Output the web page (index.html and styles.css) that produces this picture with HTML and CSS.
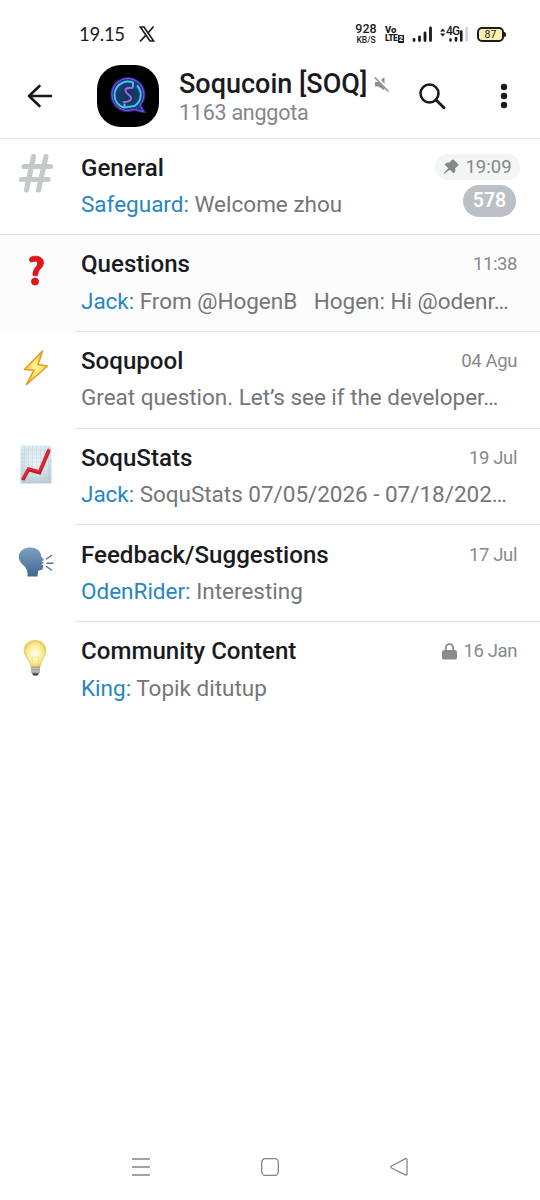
FILE: index.html
```html
<!DOCTYPE html>
<html lang="id">
<head>
<meta charset="utf-8">
<title>Soqucoin [SOQ]</title>
<link rel="stylesheet" href="styles.css">
</head>
<body>
<div class="screen">
  <div class="status">
    <span class="clock">19.15</span>
    <svg class="x-logo" width="16" height="16" viewBox="0 0 16 16" fill="none" stroke="#1b1b1d" stroke-width="1.700"><path d="M1.300 1H5L14.700 15H11Z"/><path d="M14.6 .5L9 7M6.7 9.300L1 15.500"/></svg>
    <span class="speed"><b>928</b><i>KB/S</i></span>
    <span class="volte"><b>Vo</b><span class="lte">LTE<em>2</em></span></span>
    <svg class="signal" width="21" height="17" viewBox="0 0 21 17" stroke="#1b1b1d" stroke-width="2.800" stroke-linecap="round"><path d="M2 13.500V14.500M7.500 11V14.500M13 7V14.500M18.500 2V14.500"/></svg>
    <span class="mobile"><svg width="28" height="17" viewBox="0 0 28 17"><path d="M0 5.500L2.700 2.500L5.400 5.500ZM0 7.500L2.700 10.500L5.400 7.500Z" fill="#1b1b1d"/><path d="M10.500 13.500V14.500M16 11V14.500M21.300 5.500V14.500" stroke="#1b1b1d" stroke-width="2.600" stroke-linecap="round"/><path d="M26.600 2V14.500" stroke="#d2d2d2" stroke-width="2.600" stroke-linecap="round"/></svg><span class="net">4G</span></span>
    <span class="battery">87</span>
  </div>

  <header class="header">
    <svg class="back" width="26" height="24" viewBox="0 0 26 24" fill="none" stroke="#17191c" stroke-width="2.600" stroke-linecap="round" stroke-linejoin="round"><path d="M24 12H2M12.500 2L2 12L12.500 22"/></svg>
    <svg class="avatar" width="62" height="62" viewBox="0 0 62 62" fill="none">
      <defs><radialGradient id="halo"><stop offset="0" stop-color="#143050"/><stop offset=".7" stop-color="#12406a"/><stop offset="1" stop-color="#1c3c9a"/></radialGradient></defs>
      <rect width="62" height="62" rx="24" fill="#000"/>
      <path d="M43 40A16 16 0 1 0 36 44.700C40 44 43 46.500 46.500 46.500C44.500 44 44 42 43 40Z" fill="url(#halo)" stroke="#33249b" stroke-width="3"/>
      <path d="M43 40A16 16 0 1 0 36 44.700C40 44 43 46.500 46.500 46.500C44.500 44 44 42 43 40Z" stroke="#7d6bd0" stroke-width="1"/>
      <path d="M27.500 42.800A13.300 13.300 0 0 1 26 17.500Q30 15.700 36 17.300V22.500M40 20.500A13.300 13.300 0 0 1 37.500 41L27.500 42.500V38.500" stroke="#40c9ec" stroke-width="1.900"/>
      <path d="M36 23Q28 22 28.500 26C29 29.500 35 30 34 34Q32 37.500 26 37" stroke="#a267ea" stroke-width="1.900"/>
    </svg>
    <div class="heading">
      <div class="title-line"><h1>Soqucoin [SOQ]</h1><svg width="16" height="17" viewBox="0 0 16 17"><path d="M1 6H4.500L10.500 1V14.500L4.500 10.500H1Z" fill="#8b8f92"/><path d="M1.500 .5L15.500 15.500" stroke="#fff" stroke-width="3"/><path d="M.8 1.500L14.500 15.500" stroke="#8b8f92" stroke-width="1.600"/></svg></div>
      <p class="members">1163 anggota</p>
    </div>
    <svg class="search" width="28" height="28" viewBox="0 0 28 28" fill="none" stroke="#17191c" stroke-width="2.500" stroke-linecap="round"><circle cx="11.500" cy="11.500" r="9"/><path d="M18 18L26 25.700" stroke-width="2.900"/></svg>
    <svg class="more" width="8" height="26" viewBox="0 0 8 26" fill="#17191c"><circle cx="4" cy="4" r="3.200"/><circle cx="4" cy="13" r="3.200"/><circle cx="4" cy="22" r="3.200"/></svg>
  </header>

  <main class="topics">
    <article class="topic topic-general">
      <svg class="icon" viewBox="0 0 75 96" fill="none" stroke="#c6c9cc" stroke-width="5.200" stroke-linecap="round"><path d="M33.500 18.500L26.500 52M46 18.500L38.500 52M24 28.500H50.500M21.500 41.500H48"/></svg>
      <div class="body">
        <div class="line"><h2>General</h2><span class="pinned"><svg width="16" height="16" viewBox="0 0 16 16" fill="#858889"><path d="M8.800 1Q10 0 11 1L15 5Q16 6 14.800 7L12.200 9.300Q13 13 10.500 14.200L6.800 10.700L1 15L.8 14.300L5.300 9.200L1.500 5.500Q3.200 3.200 6.700 3.600Z"/></svg>19:09</span></div>
        <div class="line"><p class="preview"><span>Safeguard:</span> Welcome zhou</p><span class="unread">578</span></div>
      </div>
    </article>
    <article class="topic topic-shaded">
      <svg class="icon" viewBox="0 0 75 96"><g fill="#e5141b" stroke="#b9161a" stroke-width=".7"><path d="M29.500 25.500Q29 22.500 32 21.700C38 20 43.800 22.500 43.500 28C43.300 33.500 37.800 34 37.800 39.500Q37.800 40.800 36.500 40.800H34Q32.800 40.800 32.900 39.500C33 33 37.800 31.500 37.500 28.500C37.200 25.300 34.500 26 32 26.900Q30 27.500 29.500 25.500Z"/><circle cx="35" cy="46.500" r="3.600"/></g></svg>
      <div class="body">
        <div class="line"><h2>Questions</h2><time>11:38</time></div>
        <div class="line"><p class="preview tight"><span>Jack:</span> From @HogenB &nbsp; Hogen: Hi @odenr…</p></div>
      </div>
    </article>
    <article class="topic">
      <svg class="icon" viewBox="0 0 75 96"><defs><radialGradient id="bolt"><stop offset="0" stop-color="#fff9a5"/><stop offset="1" stop-color="#ffd329"/></radialGradient></defs><path d="M42.500 19L24.500 37.500L34 38.200L26.500 52.500L47.500 34L38 32.500Z" fill="url(#bolt)" stroke="#e69a27" stroke-width="1.600" stroke-linejoin="round"/></svg>
      <div class="body">
        <div class="line"><h2>Soqupool</h2><time>04 Agu</time></div>
        <div class="line"><p class="preview tight">Great question. Let’s see if the developer…</p></div>
      </div>
    </article>
    <article class="topic">
      <svg class="icon" viewBox="0 0 75 96"><defs><linearGradient id="paper" x2="0" y2="1"><stop stop-color="#dcebf2"/><stop offset="1" stop-color="#b9ccd4"/></linearGradient><radialGradient id="glow"><stop stop-color="#fff" stop-opacity=".85"/><stop offset="1" stop-color="#fff" stop-opacity="0"/></radialGradient></defs><path d="M20.500 16.500H51.500V54.500H20.500Z" fill="url(#paper)"/><path d="M20.500 16.500H51.500V54.500H20.500Z" fill="url(#glow)"/><path d="M24.500 17V54M28.500 17V54M32.500 17V54M36.500 17V54M40.500 17V54M44.500 17V54M48.500 17V54M20.500 21H51.500M20.500 25H51.500M20.500 29H51.500M20.500 33H51.500M20.500 37H51.500M20.500 41H51.500M20.500 45H51.500M20.500 49H51.500" stroke="#b4d0df" stroke-width=".4"/><path d="M22.700 51L28.500 40.500L39.500 43.500L49 21" fill="none" stroke="#a91e25" stroke-width="3.600"/><path d="M22.700 50L28.500 39.500L39.500 42.500L49 20" fill="none" stroke="#ed2430" stroke-width="2.400"/></svg>
      <div class="body">
        <div class="line"><h2>SoquStats</h2><time>19 Jul</time></div>
        <div class="line"><p class="preview tight"><span>Jack:</span> SoquStats 07/05/2026 - 07/18/202…</p></div>
      </div>
    </article>
    <article class="topic">
      <svg class="icon" viewBox="0 0 75 96"><defs><linearGradient id="head" x2="0" y2="1"><stop stop-color="#7d9fc1"/><stop offset="1" stop-color="#426690"/></linearGradient></defs><path d="M27.500 51.500Q28.500 44 23 40C14 31 21 22.500 30 22.500C38 22.500 41 27 41.300 31.500L44 35L41.700 36.200L44 38L41.500 39.300L43.500 40.500L42.500 44.500Q38.500 45.500 38 46L37.500 51.500Z" fill="url(#head)"/><path d="M46.500 34L51.500 30.500M47 38.200H53M46.500 41.500L51.500 45" stroke="#54779d" stroke-width="1.500" stroke-linecap="round"/></svg>
      <div class="body">
        <div class="line"><h2>Feedback/Suggestions</h2><time>17 Jul</time></div>
        <div class="line"><p class="preview"><span>OdenRider:</span> Interesting</p></div>
      </div>
    </article>
    <article class="topic topic-last">
      <svg class="icon" viewBox="0 0 75 96"><defs><radialGradient id="bulb"><stop offset=".15" stop-color="#fffce2"/><stop offset=".75" stop-color="#f8e98a"/><stop offset="1" stop-color="#e8cf67"/></radialGradient></defs><path d="M31 45Q31 41 27.300 36.500C20.500 27 26 18.500 35 18.500C44 18.500 49.500 27 43 36.500Q40 41 40 45Z" fill="url(#bulb)" stroke="#dbc462" stroke-width=".8"/><path d="M33 43L32.300 35H38.500L37.500 43" fill="none" stroke="#e5cf75" stroke-width=".4"/><path d="M31 44.500H40V50.500L38 52H33L31 50.500Z" fill="#a3a3a0"/><path d="M31 46.500H40M31 49H40" stroke="#d0d0cd" stroke-width=".8"/><path d="M32 51.500H39L37.500 53.500H33.500Z" fill="#363636"/></svg>
      <div class="body">
        <div class="line"><h2>Community Content</h2><time><svg class="lock" width="15" height="17" viewBox="0 0 15 17"><path d="M3.800 8V5A3.700 3.900 0 0 1 11.200 5V8" fill="none" stroke="#898b8c" stroke-width="1.800"/><rect y="7" width="15" height="9.600" rx="2.200" fill="#898b8c"/></svg>16 Jan</time></div>
        <div class="line"><p class="preview"><span>King:</span> Topik ditutup</p></div>
      </div>
    </article>
  </main>

  <nav class="nav">
    <svg width="18" height="20" viewBox="0 0 18 20" stroke="#858585" stroke-width="1.500"><path d="M0 2H18M0 10H18M0 18H18"/></svg>
    <svg width="18" height="20" viewBox="0 0 18 20" fill="none" stroke="#858585" stroke-width="1.300"><rect x=".7" y="1.700" width="16.600" height="16.600" rx="3.500"/></svg>
    <svg width="18" height="20" viewBox="0 0 18 20" fill="none" stroke="#858585" stroke-width="1.300"><path d="M1.500 9L15.500 1.700Q17 1.200 17 2.700V17Q17 18.500 15.500 17.800L1.500 11Q0 10 1.500 9Z"/></svg>
  </nav>
</div>
</body>
</html>
```
FILE: styles.css
```css
* { box-sizing: border-box; }
body { margin: 0; background: #fff; font-family: Roboto, sans-serif; color: #191b1e; }
h1, h2, p { margin: 0; font-weight: 400; white-space: nowrap; }
svg { display: block; flex: none; }
.screen { width: 540px; height: 1200px; display: flex; flex-direction: column; overflow: hidden; }

.status { height: 54px; padding: 14px 34px 0 79px; display: flex; align-items: center; color: #1b1b1d; }
.clock { width: 60px; font: 18.5px/24px Lato, sans-serif; letter-spacing: -.3px; }
.speed { width: 22px; margin-left: 200px; display: flex; flex-direction: column; align-items: center; font-size: 12.5px; line-height: 12px; }
.speed b { font-weight: 500; }
.speed i { font-style: normal; font-weight: 500; font-size: 8.5px; line-height: 10px; }
.volte { width: 20px; margin-left: 8px; font: 800 9.5px/9px Roboto, sans-serif; display: flex; flex-direction: column; }
.lte { display: flex; align-items: center; font-size: 8.5px; font-weight: 900; letter-spacing: -.6px; }
.lte em { flex: none; width: 6px; margin-left: 1px; font-style: normal; font-size: 7px; line-height: 8px; text-align: center; letter-spacing: 0; background: #1b1b1d; color: #fff; }
.signal { margin-left: 7px; }
.mobile { margin-left: 7px; position: relative; }
.net { position: absolute; left: 6px; top: -1px; font-size: 12px; line-height: 12px; font-weight: 500; letter-spacing: -.7px; background: #fff; }
.battery { width: 27px; height: 15px; margin-left: 9px; border: 2px solid #1b1b1d; border-radius: 5px; background: #fff0b1; font-size: 10.5px; line-height: 11px; text-align: center; position: relative; }
.battery::after { content: ""; position: absolute; right: -4px; top: 3px; width: 2px; height: 5px; border-radius: 0 2px 2px 0; background: #1b1b1d; }

.header { height: 85px; display: flex; align-items: center; padding: 0 32px 0 27px; border-bottom: 1px solid #e9e9e9; }
.avatar { margin-left: 43.5px; }
.heading { flex: none; width: 239px; margin-left: 20.5px; padding-top: 4px; }
.title-line { display: flex; align-items: center; gap: 7px; height: 30px; }
h1 { font-size: 27px; line-height: 30px; font-weight: 500; }
.members { font-size: 21.5px; line-height: 28px; letter-spacing: -.25px; color: #84878a; }
.more { margin-left: auto; }

.topics { flex: 1; }
.topic { height: 96.75px; display: flex; }
.topic-general { height: 96px; border-bottom: 1px solid #dedede; }
.topic-shaded { background: #fcfcfc; }
.icon { width: 75px; height: 96px; }
.topic-general .icon { margin-top: -1px; }
.body { flex: 1; min-width: 0; padding: 11.2px 23px 0 6px; border-bottom: 1px solid #e2e2e2; }
.topic-general .body { padding-top: 10.5px; }
.topic-general .body, .topic-last .body { border-bottom: 0; }
.line { height: 36.3px; display: flex; align-items: center; justify-content: space-between; }
h2 { font-size: 24.1px; line-height: 36px; font-weight: 500; }
.preview { font-size: 22.5px; line-height: 36px; color: #747678; }
.preview.tight { letter-spacing: -.03px; }
.preview span { color: #2885c5; }
time { display: flex; align-items: center; gap: 7px; font-size: 18.5px; letter-spacing: -.4px; color: #87898b; }
.pinned { width: 85px; height: 26px; margin: -2px -3px 0 0; display: flex; align-items: center; justify-content: center; gap: 6px; border-radius: 13px; background: #f3f4f4; color: #858889; font-size: 18.5px; }
.unread { width: 53px; height: 32px; margin: -6px 1px 0 0; border-radius: 16px; background: #bbc0c5; color: #fff; font-size: 19.5px; line-height: 32px; font-weight: 600; text-align: center; }

.nav { height: 66px; padding: 0 132px; display: flex; align-items: center; justify-content: space-between; }
```
